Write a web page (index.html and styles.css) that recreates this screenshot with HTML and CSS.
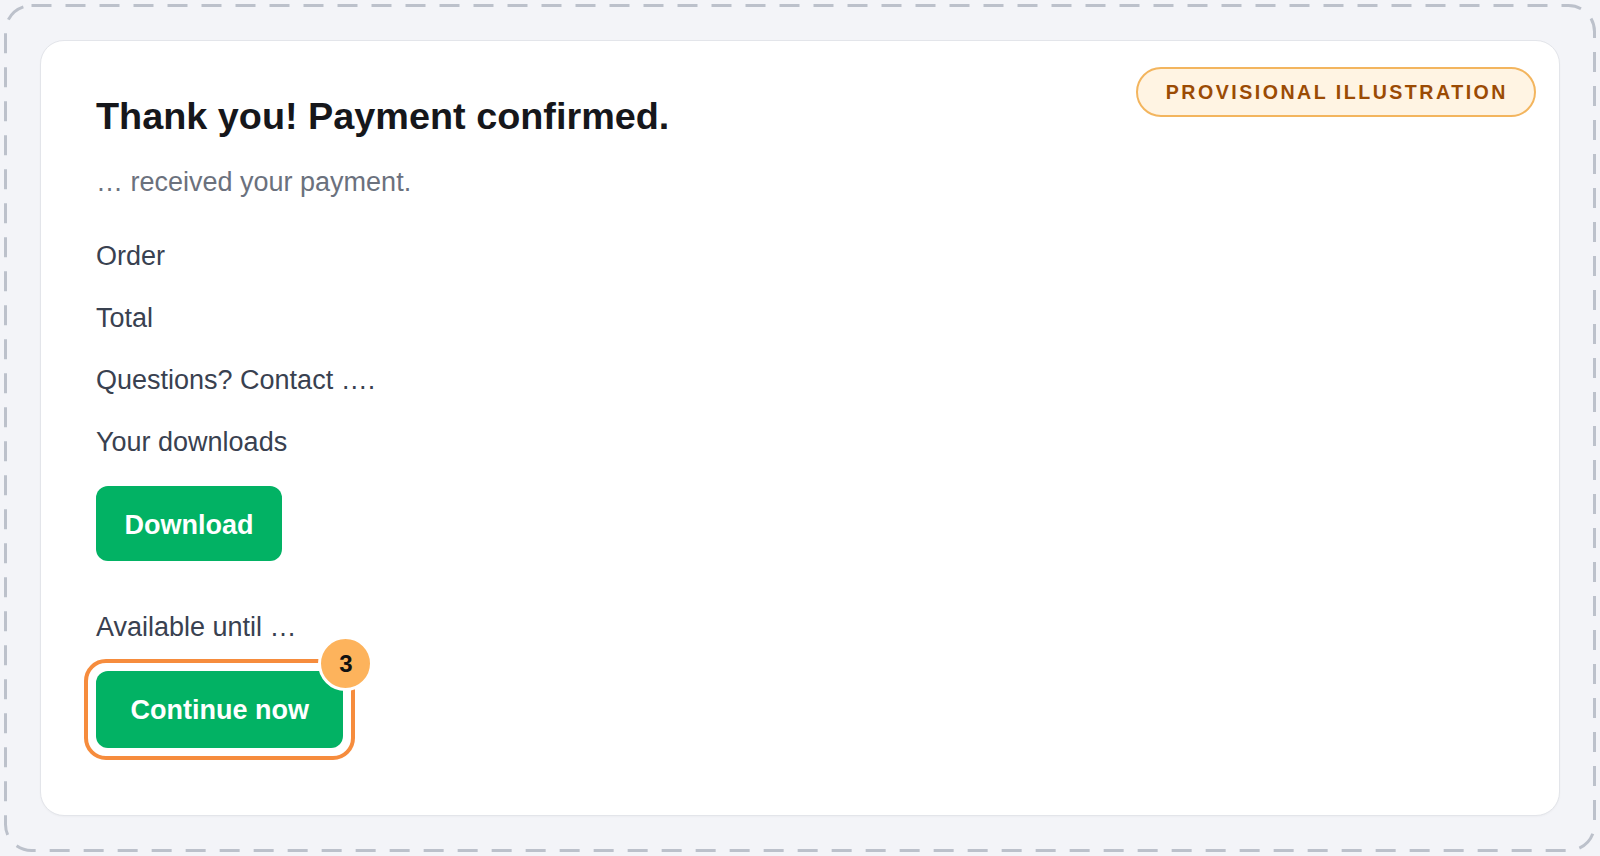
FILE: index.html
```html
<!DOCTYPE html>
<html lang="en">
<head>
<meta charset="utf-8">
<title>Payment confirmed</title>
<link rel="stylesheet" href="styles.css">
</head>
<body>
<div class="frame">
  <svg class="frame-dash" width="1592" height="848" viewBox="0 0 1592 848" aria-hidden="true">
    <rect x="1.5" y="1.5" width="1589" height="845" rx="26" ry="26" fill="none" stroke="#bcc1cb" stroke-width="3" stroke-dasharray="20 14"/>
  </svg>
  <main class="card">
    <span class="tag">PROVISIONAL ILLUSTRATION</span>
    <h1 class="title">Thank you! Payment confirmed.</h1>
    <p class="lead">… received your payment.</p>
    <p class="row">Order</p>
    <p class="row">Total</p>
    <p class="row">Questions? Contact ….</p>
    <p class="row row-last">Your downloads</p>
    <a class="btn btn-download">Download</a>
    <p class="row row-last">Available until …</p>
    <div class="highlight">
      <a class="btn btn-continue">Continue now</a>
      <span class="step">3</span>
    </div>
  </main>
</div>
</body>
</html>
```
FILE: styles.css
```css
html, body {
  margin: 0;
  padding: 0;
  background: #f3f4f8;
}
body {
  font-family: "Liberation Sans", Arial, Helvetica, sans-serif;
  color: #394150;
}
.frame {
  position: relative;
  margin: 4px;
  height: 848px;
  box-sizing: border-box;
  padding: 36px;
  display: flex;
  background: #f3f4f8;
  border-radius: 26px;
}
.frame-dash {
  position: absolute;
  left: 0;
  top: 0;
  pointer-events: none;
}
.card {
  position: relative;
  flex: 1;
  background: #ffffff;
  border: 1px solid #e3e5ea;
  border-radius: 24px;
  padding: 53px 55px 52px;
  display: flex;
  flex-direction: column;
  align-items: flex-start;
  box-shadow: 0 1px 2px rgba(20, 24, 40, 0.03);
}
.tag {
  position: absolute;
  top: 26px;
  right: 23px;
  height: 45px;
  display: flex;
  align-items: center;
  padding: 1px 26px 0 28px;
  box-sizing: content-box;
  border: 2px solid #f3b55e;
  border-radius: 999px;
  background: #fff4e3;
  color: #9b4b04;
  font-weight: 700;
  font-size: 19.6px;
  letter-spacing: 2.5px;
}
.title {
  margin: 0 0 23px;
  font-size: 37.8px;
  line-height: 45px;
  font-weight: 700;
  color: #16171b;
}
.lead {
  margin: 0 0 33px;
  font-size: 27px;
  line-height: 40.5px;
  color: #6b717d;
}
.row {
  margin: 0 0 21.5px;
  font-size: 27px;
  line-height: 40.5px;
  color: #394150;
}
.row-last {
  margin-bottom: 24px;
}
.btn {
  display: inline-block;
  background: #02b264;
  color: #ffffff;
  font-weight: 700;
  font-size: 27px;
  line-height: 40.5px;
  border-radius: 12px;
  text-decoration: none;
}
.btn-download {
  padding: 19px 28.5px 15px;
  margin-bottom: 46px;
}
.btn-continue {
  padding: 19px 34.5px 17px;
}
.highlight {
  position: relative;
  margin: -12px 0 0 -12px;
  padding: 8px;
  border: 4px solid #f68c3d;
  border-radius: 22px;
  display: flex;
}
.step {
  position: absolute;
  top: -27px;
  right: -22px;
  width: 49px;
  height: 49px;
  border: 3px solid #ffffff;
  border-radius: 50%;
  background: #fdb35c;
  color: #111111;
  font-weight: 700;
  font-size: 24px;
  display: flex;
  align-items: center;
  justify-content: center;
}
```
